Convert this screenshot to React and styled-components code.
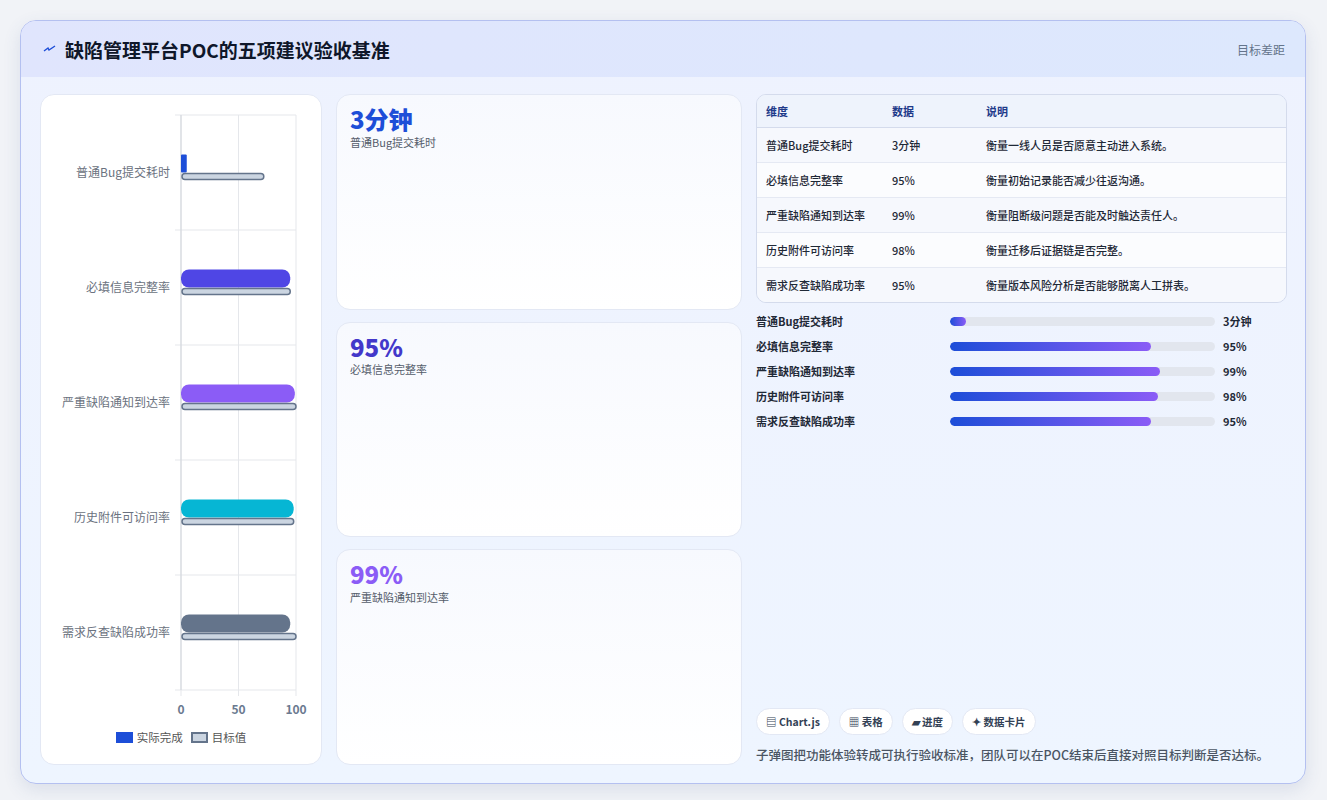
import React from "react";
import styled, { createGlobalStyle } from "styled-components";

const Global = createGlobalStyle`
  body { margin: 0; background: #f1f3f7; font-family: "Noto Sans CJK SC", "Noto Sans", sans-serif; }
`;

const ROWS = [
  { name: "普通Bug提交耗时", value: "3分钟", actual: 5, target: 72, color: "#1d4ed8", note: "衡量一线人员是否愿意主动进入系统。", pct: 6 },
  { name: "必填信息完整率", value: "95%", actual: 95, target: 95, color: "#4f46e5", note: "衡量初始记录能否减少往返沟通。", pct: 95 },
  { name: "严重缺陷通知到达率", value: "99%", actual: 99, target: 100, color: "#8b5cf6", note: "衡量阻断级问题是否能及时触达责任人。", pct: 99 },
  { name: "历史附件可访问率", value: "98%", actual: 98, target: 98, color: "#06b6d4", note: "衡量迁移后证据链是否完整。", pct: 98 },
  { name: "需求反查缺陷成功率", value: "95%", actual: 95, target: 100, color: "#64748b", note: "衡量版本风险分析是否能够脱离人工拼表。", pct: 95 },
];

const Page = styled.div`
  padding: 20px 20px 16px 20px;
`;
const Frame = styled.div`
  width: 1286px;
  height: 764px;
  box-sizing: border-box;
  border: 1px solid #b4c0f0;
  border-radius: 16px;
  overflow: hidden;
  background: linear-gradient(180deg, #eef2fe 0%, #eef5ff 100%);
  box-shadow: 0 6px 18px rgba(60, 80, 140, 0.12);
  display: flex;
  flex-direction: column;
`;
const Header = styled.div`
  height: 56px;
  flex: none;
  background: linear-gradient(90deg, #e0e5fd, #dde8fd);
  display: flex;
  align-items: center;
  padding: 0 20px 0 22px;
  gap: 8px;
`;
const Title = styled.h1`
  margin: 0;
  font-size: 19px;
  font-weight: 700;
  color: #0f172a;
  flex: 1;
`;
const HeaderTag = styled.span`
  font-size: 12px;
  color: #64748b;
`;
const Body = styled.div`
  flex: 1;
  display: grid;
  grid-template-columns: 282px 406px 1fr;
  gap: 14px;
  padding: 17px 18px 18px 19px;
  min-height: 0;
`;
const Card = styled.div`
  background: #fff;
  border: 1px solid #e3e8f4;
  border-radius: 14px;
  box-sizing: border-box;
`;
const ChartCard = styled(Card)`
  display: flex;
  flex-direction: column;
  align-items: center;
  padding: 10px 0 14px;
`;
const Legend = styled.div`
  display: flex;
  gap: 8px;
  align-items: center;
  font-size: 11.5px;
  color: #555;
  margin-top: 2px;
`;
const Swatch = styled.span`
  width: 17px;
  height: 11px;
  background: ${(p) => p.$fill};
  border: ${(p) => (p.$border ? "2px solid #64748b" : "none")};
  box-sizing: border-box;
  margin-right: 4px;
  display: inline-block;
  vertical-align: -1px;
`;
const Mid = styled.div`
  display: grid;
  grid-template-rows: repeat(3, 1fr);
  gap: 12px;
`;
const Metric = styled(Card)`
  background: linear-gradient(180deg, #f7f9fe, #ffffff);
  padding: 10px 13px;
`;
const MetricValue = styled.div`
  font-size: 24px;
  font-weight: 800;
  color: ${(p) => p.$color};
  line-height: 1.2;
`;
const MetricLabel = styled.div`
  font-size: 11px;
  color: #555d6b;
`;
const Right = styled.div`
  display: flex;
  flex-direction: column;
`;
const Table = styled.table`
  width: 100%;
  border-collapse: separate;
  border-spacing: 0;
  border: 1px solid #d4dbec;
  border-radius: 10px;
  overflow: hidden;
  font-size: 11px;
  font-weight: 500;
  color: #1f2937;
  th {
    text-align: left;
    font-weight: 700;
    color: #1e3a8a;
    height: 32px;
    background: #eef3fc;
    padding: 0 9px;
    border-bottom: 1px solid #d4dbec;
  }
  td {
    height: 34px;
    padding: 0 9px;
    border-bottom: 1px solid #e5e9f3;
  }
  tr:last-child td { border-bottom: none; }
  tbody tr:nth-child(odd) td { background: #f6f8fd; }
  tbody tr:nth-child(even) td { background: #fbfcfe; }
`;
const Bars = styled.div`
  display: flex;
  flex-direction: column;
  gap: 9px;
  margin-top: 10px;
`;
const BarRow = styled.div`
  display: grid;
  grid-template-columns: 186px 265px 1fr;
  align-items: center;
  gap: 8px;
  font-size: 11px;
  font-weight: 600;
  color: #1f2937;
  height: 16px;
`;
const Track = styled.div`
  height: 9px;
  border-radius: 5px;
  background: #e2e6ee;
  overflow: hidden;
`;
const Fill = styled.div`
  height: 100%;
  border-radius: 5px;
  background: linear-gradient(90deg, #1d4ed8, #8b5cf6);
`;
const Chips = styled.div`
  margin-top: auto;
  display: flex;
  gap: 9px;
`;
const Chip = styled.span`
  font-size: 10.5px;
  font-weight: 700;
  color: #334155;
  background: #fff;
  border: 1px solid #e3e8f4;
  border-radius: 14px;
  padding: 5px 9px;
`;
const Note = styled.p`
  margin: 10px 0 0;
  font-size: 12.5px;
  line-height: 20px;
  color: #4b5563;
  font-weight: 500;
`;

const Chart = () => {
  const x0 = 141, w = 115, top = 10, rowH = 115;
  const sx = (v) => x0 + (v / 100) * w;
  return (
    <svg width="282" height="622" style={{ fontFamily: "Noto Sans CJK SC, sans-serif" }}>
      {[0, 50, 100].map((v) => (
        <line key={v} x1={sx(v)} y1={top} x2={sx(v)} y2={top + rowH * 5 + 6} stroke="#e5e7eb" />
      ))}
      {[0, 1, 2, 3, 4, 5].map((i) => (
        <line key={i} x1={x0 - 6} y1={top + i * rowH} x2={sx(100)} y2={top + i * rowH} stroke="#e5e7eb" />
      ))}
      <line x1={x0} y1={top} x2={x0} y2={top + rowH * 5} stroke="#d1d5db" />
      {ROWS.map((r, i) => {
        const cy = top + i * rowH + rowH / 2;
        return (
          <g key={r.name}>
            <text x={x0 - 11} y={cy + 4} textAnchor="end" fontSize="12" fill="#6b7280">{r.name}</text>
            <rect x={x0} y={cy - 18} width={sx(r.actual) - x0} height={18} rx={i === 0 ? 1 : 8} fill={r.color} />
            <rect x={x0 + 1} y={cy + 1} width={sx(r.target) - x0 - 1} height={6} rx={3} fill="#cbd5e1" stroke="#64748b" strokeWidth="1.5" />
          </g>
        );
      })}
      {[0, 50, 100].map((v) => (
        <text key={v} x={sx(v)} y={top + rowH * 5 + 24} textAnchor="middle" fontSize="12" fontWeight="700" fill="#6b7a90">{v}</text>
      ))}
    </svg>
  );
};

export default function App() {
  const colors = ["#1d4ed8", "#4338ca", "#8b5cf6"];
  return (
    <Page>
      <Global />
      <Frame>
        <Header>
          <svg width="14" height="10" viewBox="0 0 14 10"><path d="M1 7 L5 4 L6 6 L12 2" stroke="#1d4ed8" strokeWidth="1.4" fill="none" /></svg>
          <Title>缺陷管理平台POC的五项建议验收基准</Title>
          <HeaderTag>目标差距</HeaderTag>
        </Header>
        <Body>
          <ChartCard>
            <Chart />
            <Legend>
              <span><Swatch $fill="#1d4ed8" />实际完成</span>
              <span><Swatch $fill="#cbd5e1" $border />目标值</span>
            </Legend>
          </ChartCard>
          <Mid>
            {ROWS.slice(0, 3).map((r, i) => (
              <Metric key={r.name}>
                <MetricValue $color={colors[i]}>{r.value}</MetricValue>
                <MetricLabel>{r.name}</MetricLabel>
              </Metric>
            ))}
          </Mid>
          <Right>
            <Table>
              <thead>
                <tr><th style={{ width: 108 }}>维度</th><th style={{ width: 76 }}>数据</th><th>说明</th></tr>
              </thead>
              <tbody>
                {ROWS.map((r) => (
                  <tr key={r.name}><td>{r.name}</td><td>{r.value}</td><td>{r.note}</td></tr>
                ))}
              </tbody>
            </Table>
            <Bars>
              {ROWS.map((r) => (
                <BarRow key={r.name}>
                  <span>{r.name}</span>
                  <Track><Fill style={{ width: `${r.pct === 6 ? 6 : r.pct * 0.8}%` }} /></Track>
                  <span>{r.value}</span>
                </BarRow>
              ))}
            </Bars>
            <Chips>
              <Chip>▤ Chart.js</Chip>
              <Chip>▦ 表格</Chip>
              <Chip>▰ 进度</Chip>
              <Chip>✦ 数据卡片</Chip>
            </Chips>
            <Note>子弹图把功能体验转成可执行验收标准，团队可以在POC结束后直接对照目标判断是否达标。</Note>
          </Right>
        </Body>
      </Frame>
    </Page>
  );
}
